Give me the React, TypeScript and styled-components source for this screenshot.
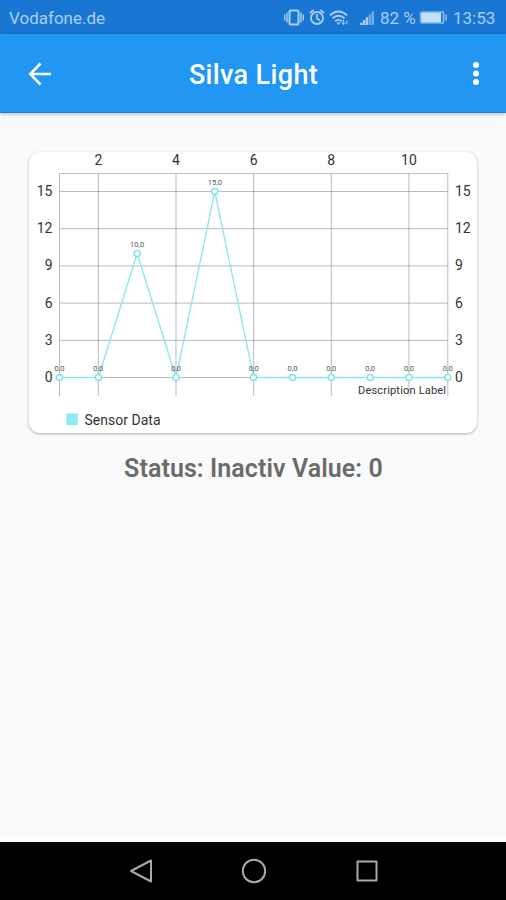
import React from "react";
import styled, { createGlobalStyle } from "styled-components";

const GlobalStyle = createGlobalStyle`
  body { margin: 0; background: #fafafa; font-family: Roboto, "Liberation Sans", sans-serif; }
  svg { display: block; flex: none; }
`;

const Screen = styled.div`
  display: flex;
  flex-direction: column;
  width: 506px;
  height: 900px;
  overflow: hidden;
  background: #fafafa;
`;

const StatusBar = styled.header`
  display: flex;
  align-items: center;
  justify-content: space-between;
  box-sizing: border-box;
  height: 34px;
  padding: 2px 12px 0 9px;
  background: #1976d2;
  color: #a9cff5;
  font-size: 17px;
  line-height: 32px;
`;

const Indicators = styled.div`
  display: flex;
  align-items: center;
`;

const Reading = styled.span<{ $left: number; $width: number }>`
  width: ${(p) => p.$width}px;
  margin-left: ${(p) => p.$left}px;
  white-space: nowrap;
`;

const BatterySlot = styled.div`
  margin-left: 4px;
`;

const AppBar = styled.nav`
  display: grid;
  grid-template-columns: 80px 1fr 80px;
  align-items: center;
  height: 79px;
  background: #2196f3;
  border-bottom: 1px solid #1d83d4;
  box-sizing: border-box;
  box-shadow: 0 1px 4px rgba(0, 0, 0, 0.28);
  color: #fff;
`;

const IconButton = styled.button<{ $end?: boolean }>`
  display: flex;
  justify-content: ${(p) => (p.$end ? "flex-end" : "flex-start")};
  padding: ${(p) => (p.$end ? "0 25px 0 0" : "0 0 0 23px")};
  border: 0;
  background: none;
  color: inherit;
`;

const Title = styled.h1`
  margin: 4px 0 0 1px;
  font-size: 27px;
  font-weight: 500;
  line-height: 34px;
  letter-spacing: 0.35px;
  text-align: center;
`;

const Content = styled.main`
  display: flex;
  flex: 1;
  flex-direction: column;
  align-items: center;
  padding-top: 39px;
`;

const Card = styled.section`
  width: 448px;
  height: 281px;
  border-radius: 11px;
  background: #fff;
  box-shadow: 0 1px 3px rgba(0, 0, 0, 0.3);
`;

const Status = styled.p`
  margin: 19px 0 0 1px;
  color: #6b6b6b;
  font-size: 25px;
  font-weight: 600;
  line-height: 34px;
  letter-spacing: 0.08px;
  white-space: nowrap;
`;

const NavigationBar = styled.footer`
  display: flex;
  align-items: center;
  justify-content: center;
  gap: 88px;
  box-sizing: border-box;
  height: 61px;
  padding: 0 0 0 1px;
  border-top: 3px solid #fff;
  background: #000;
`;

const Chart = styled.svg`
  overflow: visible;
  font-family: Roboto, "Liberation Sans", sans-serif;
`;

const AxisText = styled.text`
  fill: #333;
  font-size: 14px;
`;

const PointText = styled.text`
  fill: #555;
  font-size: 7.5px;
  text-anchor: middle;
`;

const NoteText = styled.text`
  fill: #333;
`;

const values = [0, 0, 10, 0, 15, 0, 0, 0, 0, 0, 0];
const xTicks = [2, 4, 6, 8, 10];
const yTicks = [0, 3, 6, 9, 12, 15];
const left = 30.5;
const right = 418.8;
const top = 21.5;
const bottom = 244;
const xAt = (n: number) => left + ((n - 1) * (right - left)) / 10;
const yAt = (v: number) => 225.5 - v * 12.4;

function SensorChart() {
  return (
    <Chart width="448" height="281" viewBox="0 0 448 281">
      <g stroke="#777" strokeOpacity="0.5" strokeWidth="1">
        {yTicks.map((v) => (
          <line key={v} x1={left} x2={right} y1={yAt(v)} y2={yAt(v)} />
        ))}
        <line x1={left} x2={right} y1={top} y2={top} strokeOpacity="0.45" />
        {[1, ...xTicks, 11].map((n) => (
          <line key={n} x1={xAt(n)} x2={xAt(n)} y1={top} y2={bottom} />
        ))}
      </g>
      {xTicks.map((n) => (
        <AxisText key={n} x={xAt(n)} y="12.5" textAnchor="middle">{n}</AxisText>
      ))}
      {yTicks.map((v) => (
        <React.Fragment key={v}>
          <AxisText x="23.5" y={yAt(v) + 4.4} textAnchor="end">{v}</AxisText>
          <AxisText x="426" y={yAt(v) + 4.4}>{v}</AxisText>
        </React.Fragment>
      ))}
      <polyline
        points={values.map((v, i) => `${xAt(i + 1)},${yAt(v)}`).join(" ")}
        fill="none"
        stroke="#92e6ea"
        strokeWidth="1.4"
      />
      {values.map((v, i) => (
        <React.Fragment key={i}>
          <circle cx={xAt(i + 1)} cy={yAt(v)} r="3" fill="#fff" stroke="#7fe5ed" strokeWidth="1.5" />
          <PointText x={xAt(i + 1)} y={yAt(v) - 6.7}>{v},0</PointText>
        </React.Fragment>
      ))}
      <NoteText x="329" y="242" fontSize="11" textLength="88">Description Label</NoteText>
      <rect x="37.3" y="261.5" width="11.5" height="11.5" fill="#8ceafb" />
      <NoteText x="55.5" y="272.5" fontSize="14" textLength="76">Sensor Data</NoteText>
    </Chart>
  );
}

function StatusIcons() {
  return (
    <svg width="66" height="20" viewBox="0 0 66 20" fill="none" stroke="#a9cff5">
      <rect x="5.5" y="2.5" width="9" height="14" rx="1" strokeWidth="2" />
      <path d="M3 4.5v10M17 4.5v10M.7 6.5v6M19.3 6.5v6" strokeWidth="1.4" />
      <circle cx="33" cy="10" r="6" strokeWidth="1.8" />
      <path d="M33 6v4.5l3 2M25.8 5l4-3M40.2 5l-4-3" strokeWidth="1.6" />
      <path d="M46 7.2q8.5-7.4 17 0M48.5 10.3q6-5.2 12 0M51.3 13.3q3.2-2.8 6.4 0" strokeWidth="1.8" />
      <path d="m52.5 14.5 2 2.6 2-2.6z" fill="#a9cff5" stroke="none" />
      <path d="M59.5 11.5v5m-1.7-2 1.7 2 1.7-2M62.8 16.5v-4" strokeWidth="1" />
    </svg>
  );
}

function SignalIcon() {
  return (
    <svg width="26" height="20" viewBox="0 0 26 20">
      <path d="M10.2 14.5h2.3V17h-2.3zM13 12h2.3v5H13zM15.8 9.2h2.3V17h-2.3z" fill="#a9cff5" />
      <path d="M18.6 6.5h2.3V17h-2.3zM21.4 3.5h2.6V17h-2.6z" fill="#72addf" />
    </svg>
  );
}

function BatteryIcon() {
  return (
    <svg width="29" height="16" viewBox="0 0 29 16">
      <rect x="1.5" y="2" width="23" height="11" rx="1.5" fill="#c4dff8" stroke="#79b1e8" strokeWidth="1.5" />
      <path d="M22 2h2v11h-2z" fill="#1976d2" />
      <path d="M22 2h1.5q1 0 1 1v9q0 1-1 1H22M27 4.5v6" fill="none" stroke="#8abcec" strokeWidth="1.5" />
    </svg>
  );
}

export default function App() {
  return (
    <Screen>
      <GlobalStyle />
      <StatusBar>
        <span>Vodafone.de</span>
        <Indicators>
          <StatusIcons />
          <SignalIcon />
          <Reading $left={4} $width={35}>82 %</Reading>
          <BatterySlot><BatteryIcon /></BatterySlot>
          <Reading $left={5} $width={41}>13:53</Reading>
        </Indicators>
      </StatusBar>
      <AppBar>
        <IconButton aria-label="Back">
          <svg width="32" height="32" viewBox="0 0 32 32" fill="none" stroke="currentColor" strokeWidth="2.5">
            <path d="M28 17H7.5M17.5 6.5 7.2 17l10.3 10.5" />
          </svg>
        </IconButton>
        <Title>Silva Light</Title>
        <IconButton $end aria-label="More options">
          <svg width="10" height="30" viewBox="0 0 10 30" fill="currentColor">
            <circle cx="5" cy="7" r="3" />
            <circle cx="5" cy="15.5" r="3" />
            <circle cx="5" cy="24" r="3" />
          </svg>
        </IconButton>
      </AppBar>
      <Content>
        <Card><SensorChart /></Card>
        <Status>Status: Inactiv Value: 0</Status>
      </Content>
      <NavigationBar>
        <svg width="24" height="26" viewBox="0 0 24 26" fill="none" stroke="#aaa" strokeWidth="2" strokeLinejoin="round">
          <path d="M22 2.5v21L2 13z" />
        </svg>
        <svg width="26" height="26" viewBox="0 0 26 26" fill="none" stroke="#aaa" strokeWidth="2">
          <circle cx="13" cy="13" r="11.2" />
        </svg>
        <svg width="24" height="26" viewBox="0 0 24 26" fill="none" stroke="#aaa" strokeWidth="2" strokeLinejoin="round">
          <path d="M2.5 3.5h19v19h-19z" />
        </svg>
      </NavigationBar>
    </Screen>
  );
}
